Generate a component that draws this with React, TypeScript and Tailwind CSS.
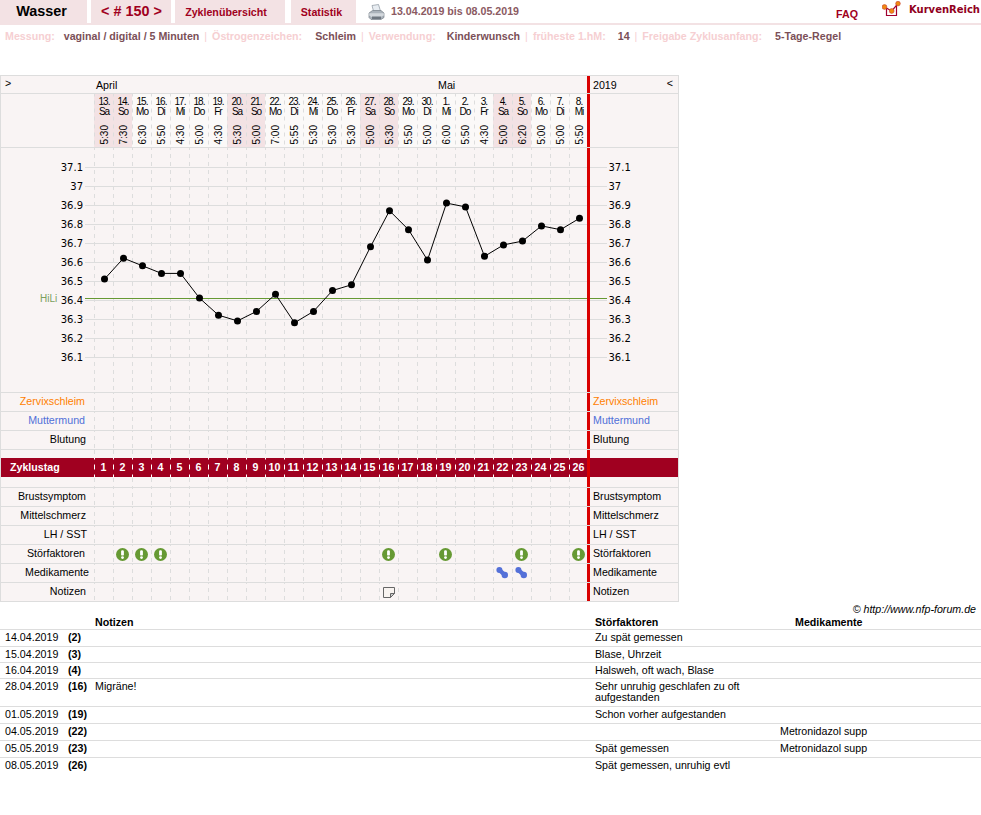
import React from "react";

const days = [
  ["13.", "Sa", "5:30"], ["14.", "So", "7:30"], ["15.", "Mo", "6:30"], ["16.", "Di", "5:50"],
  ["17.", "Mi", "4:30"], ["18.", "Do", "5:00"], ["19.", "Fr", "4:30"], ["20.", "Sa", "5:30"],
  ["21.", "So", "5:00"], ["22.", "Mo", "7:00"], ["23.", "Di", "5:55"], ["24.", "Mi", "5:30"],
  ["25.", "Do", "5:30"], ["26.", "Fr", "5:30"], ["27.", "Sa", "5:00"], ["28.", "So", "5:30"],
  ["29.", "Mo", "5:50"], ["30.", "Di", "5:00"], ["1.", "Mi", "6:00"], ["2.", "Do", "5:50"],
  ["3.", "Fr", "4:30"], ["4.", "Sa", "5:00"], ["5.", "So", "6:20"], ["6.", "Mo", "5:00"],
  ["7.", "Di", "5:00"], ["8.", "Mi", "5:50"],
];

const temps = [
  36.51, 36.62, 36.58, 36.54, 36.54, 36.41, 36.32, 36.29, 36.34, 36.43, 36.28, 36.34, 36.45,
  36.48, 36.68, 36.87, 36.77, 36.61, 36.91, 36.89, 36.63, 36.69, 36.71, 36.79, 36.77, 36.83,
];

const scale = ["37.1", "37", "36.9", "36.8", "36.7", "36.6", "36.5", "36.4", "36.3", "36.2", "36.1"];

const notes = [
  { date: "14.04.2019", day: "(2)", note: "", stoer: "Zu spät gemessen", med: "", h: "h-[17px]" },
  { date: "15.04.2019", day: "(3)", note: "", stoer: "Blase, Uhrzeit", med: "", h: "h-[16px]" },
  { date: "16.04.2019", day: "(4)", note: "", stoer: "Halsweh, oft wach, Blase", med: "", h: "h-[16px]" },
  { date: "28.04.2019", day: "(16)", note: "Migräne!", stoer: "Sehr unruhig geschlafen zu oft aufgestanden", med: "", h: "h-[28px]" },
  { date: "01.05.2019", day: "(19)", note: "", stoer: "Schon vorher aufgestanden", med: "", h: "h-[17px]" },
  { date: "04.05.2019", day: "(22)", note: "", stoer: "", med: "Metronidazol supp", h: "h-[17px]" },
  { date: "05.05.2019", day: "(23)", note: "", stoer: "Spät gemessen", med: "Metronidazol supp", h: "h-[17px]" },
  { date: "08.05.2019", day: "(26)", note: "", stoer: "Spät gemessen, unruhig evtl", med: "", h: "h-[17px]" },
];

const stoerDays = [2, 3, 4, 16, 19, 23, 26];
const medDays = [22, 23];

const xOf = (i: number) => 104.5 + i * 19;
const yOf = (t: number) => 19 + (37.1 - t) * 190;

function WarnIcon() {
  return (
    <svg width="13" height="13" viewBox="0 0 13 13" className="block">
      <circle cx="6.5" cy="6.5" r="6.5" fill="#669933" />
      <rect x="5.1" y="2.2" width="2.8" height="5.4" rx="1.2" fill="#fff" />
      <circle cx="6.5" cy="9.6" r="1.4" fill="#fff" />
    </svg>
  );
}

function PillIcon() {
  return (
    <svg width="13" height="13" viewBox="0 0 13 13" className="block">
      <line x1="3.4" y1="3" x2="8.8" y2="8" stroke="#5470d8" strokeWidth="4.4" />
      <circle cx="3.4" cy="3" r="3" fill="#5470d8" />
      <circle cx="8.8" cy="8" r="3.2" fill="#5470d8" />
    </svg>
  );
}

function NoteIcon() {
  return (
    <svg width="12" height="11" viewBox="0 0 12 11" className="block">
      <path d="M0.5 0.5H11.5V6.5L7.5 10.5H0.5Z" fill="#f8f3f0" stroke="#666" />
      <path d="M11.5 6.5H7.5V10.5Z" fill="#ccc" stroke="#666" />
    </svg>
  );
}

function PrinterIcon() {
  return (
    <svg width="17" height="17" viewBox="0 0 17 17" className="block">
      <path d="M4 1.5L10.5 0.5L12.5 7H5.5Z" fill="#e8edf2" stroke="#8a949e" strokeWidth="0.7" />
      <path d="M1 9L4.5 6.5H13L16 9V13.5L13 15.5H3L1 13.5Z" fill="#aab2ba" stroke="#79818a" strokeWidth="0.7" />
      <path d="M1.2 9.2H15.8V11.5L12.5 13H3.5L1.2 11.5Z" fill="#d3d8dd" />
      <rect x="4" y="12.5" width="9" height="2.5" fill="#6f7780" />
    </svg>
  );
}

function LogoIcon() {
  return (
    <svg width="20" height="18" viewBox="0 0 20 18" className="block">
      <path d="M2 6C3.5 7.5 4 7.5 4.5 7.5V14.5H14.5V3" fill="none" stroke="#a00030" strokeWidth="1.2" />
      <path d="M2.5 6L9.7 10L16 2.6" fill="none" stroke="#a00030" strokeWidth="1.2" />
      <circle cx="2.5" cy="6" r="2.4" fill="#f08a10" stroke="#c84030" strokeWidth="0.6" />
      <circle cx="9.7" cy="10" r="2.4" fill="#f08a10" stroke="#c84030" strokeWidth="0.6" />
      <circle cx="16" cy="2.6" r="2.3" fill="#f08a10" stroke="#c84030" strokeWidth="0.6" />
    </svg>
  );
}

const dash = "bg-[linear-gradient(#ddd_50%,transparent_50%)] bg-[length:1px_8px] bg-repeat-y bg-left";

function Cells({ render, cellClass = dash }: { render?: (n: number) => React.ReactNode; cellClass?: string }) {
  return (
    <div className="flex h-full">
      {days.map((_, i) => (
        <div key={i} className={`w-[19px] h-full flex items-center justify-center ${cellClass}`}>
          {render ? render(i + 1) : null}
        </div>
      ))}
    </div>
  );
}

function RedBar() {
  return <div className="w-[3px] -ml-px h-full bg-[#d90000] shrink-0 relative z-10" />;
}

function Row({ left, right, color = "text-black", pr = "pr-[9px]", render }: {
  left: string; right: string; color?: string; pr?: string; render?: (n: number) => React.ReactNode;
}) {
  return (
    <div className="flex h-[19px] border-b border-[#ddd]">
      <div className={`w-[93px] shrink-0 text-right ${pr} leading-[17px] ${color}`}>{left}</div>
      <Cells render={render} />
      <RedBar />
      <div className={`flex-1 pl-[3px] leading-[17px] ${color}`}>{right}</div>
    </div>
  );
}

function Sep() {
  return <span className="text-[#f6cfd2] font-normal px-[5px]">|</span>;
}

export default function App() {
  return (
    <div className="w-[981px] h-[815px] bg-white overflow-hidden font-['Liberation_Sans',Arial,sans-serif] text-[10.67px] text-black">
      {/* Top bar */}
      <div className="flex h-[25px] border-b-2 border-[#f3e2e4]">
        <div className="w-[87px] bg-[#f3e2e4] flex items-center justify-center pr-[4px] font-bold text-[14.4px]">Wasser</div>
        <div className="w-[80px] ml-[4px] bg-[#f3e2e4] flex items-center justify-center pl-[1px] font-bold text-[14.4px] text-[#a00020]">&lt; # 150 &gt;</div>
        <div className="w-[110px] ml-[4px] bg-[#f3e2e4] flex items-center justify-center pr-[8px] font-bold text-[#a00020]">Zyklenübersicht</div>
        <div className="w-[65px] ml-[6px] bg-[#f3e2e4] flex items-center justify-center pr-[4px] font-bold text-[#a00020]">Statistik</div>
        <div className="ml-[12px] mt-[4px]"><PrinterIcon /></div>
        <div className="ml-[6px] font-bold text-[#8b5a62] leading-[23px]">13.04.2019 bis 08.05.2019</div>
        <div className="ml-auto mt-[7px] font-bold text-[#a00020] leading-[14px]">FAQ</div>
        <div className="ml-[24px] mt-[1px]"><LogoIcon /></div>
        <div className="ml-[7px] mr-[1px] mt-[3px] font-bold text-[#900020] font-['DejaVu_Sans',sans-serif] text-[10px] leading-[14px]">KurvenReich</div>
      </div>

      {/* Settings line */}
      <div className="h-[50px] pl-[5px] pt-[4px] font-bold leading-[14px] text-[#7b4f57] whitespace-nowrap">
        <span className="text-[#f6cfd2] mr-[9px]">Messung:</span>vaginal / digital / 5 Minuten<Sep />
        <span className="text-[#f6cfd2] mr-[13px]">Östrogenzeichen:</span>Schleim<Sep />
        <span className="text-[#f6cfd2] mr-[11px]">Verwendung:</span>Kinderwunsch<Sep />
        <span className="text-[#f6cfd2] mr-[12px]">früheste 1.hM:</span>14<Sep />
        <span className="text-[#f6cfd2] mr-[13px]">Freigabe Zyklusanfang:</span>5-Tage-Regel
      </div>

      {/* Cycle sheet */}
      <div className="w-[679px] h-[527px] bg-[#f9f4f4] border-x border-t border-[#ddd]">
        <div className="flex h-[18px] border-b border-[#ddd] leading-[19px]">
          <div className="w-[93px] shrink-0 pl-[4px] leading-[14px]">&gt;</div>
          <div className="w-[342px] pl-[2px]">April</div>
          <div className="w-[152px] pl-[2px]">Mai</div>
          <RedBar />
          <div className="flex-1 flex justify-between pl-[3px] pr-[5px]">
            <span>2019</span>
            <span className="leading-[14px]">&lt;</span>
          </div>
        </div>

        <div className="flex h-[54px] border-b border-[#ddd]">
          <div className="w-[93px] shrink-0" />
          <div className="flex h-full">
            {days.map((d, i) => {
              const weekend = d[1] === "Sa" || d[1] === "So";
              return (
                <div key={i} className={`w-[19px] h-full pl-px flex flex-col items-center ${dash} ${weekend ? "bg-[#f3e2e4]" : "bg-[#fbf9f8]"}`}>
                  <div className="mt-[3px] text-[10px] leading-[10px] tracking-[-1px] text-center">{d[0]}<br />{d[1]}</div>
                  <div className="mt-[8px] text-[10px] leading-[11px] [writing-mode:vertical-rl] rotate-180">{d[2]}</div>
                </div>
              );
            })}
          </div>
          <RedBar />
          <div className="flex-1" />
        </div>

        <div className="relative flex h-[245px] border-b border-[#ddd]">
          <div className="w-[93px] shrink-0" />
          <Cells />
          <RedBar />
          <div className="flex-1" />
          <svg width="679" height="244" className="absolute left-[-1px] top-0">
            {scale.map((s, i) => (
              <g key={s}>
                <line x1="85" x2="587" y1={19.5 + i * 19} y2={19.5 + i * 19} stroke="#ddd" />
                <line x1="590" x2="607" y1={19.5 + i * 19} y2={19.5 + i * 19} stroke="#ddd" />
                <text x="83" y={23 + i * 19} textAnchor="end" fontFamily="DejaVu Sans" fontSize="10" fill="#000">{s}</text>
                <text x="608.5" y={23 + i * 19} fontFamily="DejaVu Sans" fontSize="10" fill="#000">{s}</text>
              </g>
            ))}
            <line x1="85" x2="587" y1="150.5" y2="150.5" stroke="#669933" />
            <line x1="590" x2="607" y1="150.5" y2="150.5" stroke="#669933" />
            <text x="40" y="154" fontFamily="Liberation Sans" fontSize="10" fill="#7a9f5c">HiLi</text>
            <polyline points={temps.map((t, i) => `${xOf(i)},${yOf(t)}`).join(" ")} fill="none" stroke="#000" strokeWidth="1" />
            {temps.map((t, i) => <circle key={i} cx={xOf(i)} cy={yOf(t)} r="3.5" fill="#000" />)}
          </svg>
        </div>

        <Row left="Zervixschleim" right="Zervixschleim" color="text-[#ff8000]" />
        <Row left="Muttermund" right="Muttermund" color="text-[#5070d8]" />
        <Row left="Blutung" right="Blutung" pr="pr-[8px]" />

        <div className="flex h-[8px]">
          <div className="w-[93px] shrink-0" />
          <Cells />
          <RedBar />
        </div>

        <div className="flex h-[19px] bg-[#a00020] text-white font-bold leading-[19px]">
          <div className="w-[93px] shrink-0 pl-[9px]">Zyklustag</div>
          <Cells
            cellClass="bg-[linear-gradient(transparent_20%,#fff_20%,#fff_70%,transparent_70%)] bg-[length:1px_10px] bg-repeat-y bg-left"
            render={(n) => <span>{n}</span>}
          />
          <RedBar />
        </div>

        <div className="flex h-[11px] border-b border-[#ddd]">
          <div className="w-[93px] shrink-0" />
          <Cells />
          <RedBar />
        </div>

        <Row left="Brustsymptom" right="Brustsymptom" pr="pr-[8px]" />
        <Row left="Mittelschmerz" right="Mittelschmerz" pr="pr-[8px]" />
        <Row left="LH / SST" right="LH / SST" pr="pr-[7px]" />
        <Row left="Störfaktoren" right="Störfaktoren" pr="pr-[9px]"
          render={(n) => (stoerDays.includes(n) ? <WarnIcon /> : null)} />
        <Row left="Medikamente" right="Medikamente" pr="pr-[5px]"
          render={(n) => (medDays.includes(n) ? <PillIcon /> : null)} />
        <Row left="Notizen" right="Notizen" pr="pr-[8px]"
          render={(n) => (n === 16 ? <NoteIcon /> : null)} />
      </div>

      {/* Notes list */}
      <div className="text-right pr-[5px] italic leading-[13px] mt-[1px]">© http://www.nfp-forum.de</div>
      <div className="flex h-[14px] font-bold leading-[13px] border-b border-[#ddd]">
        <div className="w-[95px] shrink-0" />
        <div className="w-[500px] shrink-0">Notizen</div>
        <div className="w-[200px] shrink-0">Störfaktoren</div>
        <div>Medikamente</div>
      </div>
      {notes.map((n, i) => (
        <div key={n.date} className={`flex ${n.h} leading-[11px] pt-[2px] ${i < notes.length - 1 ? "border-b border-[#ddd]" : ""}`}>
          <div className="w-[68px] shrink-0 pl-[5px]">{n.date}</div>
          <div className="w-[27px] shrink-0 font-bold">{n.day}</div>
          <div className="w-[500px] shrink-0">{n.note}</div>
          <div className="w-[185px] shrink-0 pr-[10px]">{n.stoer}</div>
          <div>{n.med}</div>
        </div>
      ))}
    </div>
  );
}
